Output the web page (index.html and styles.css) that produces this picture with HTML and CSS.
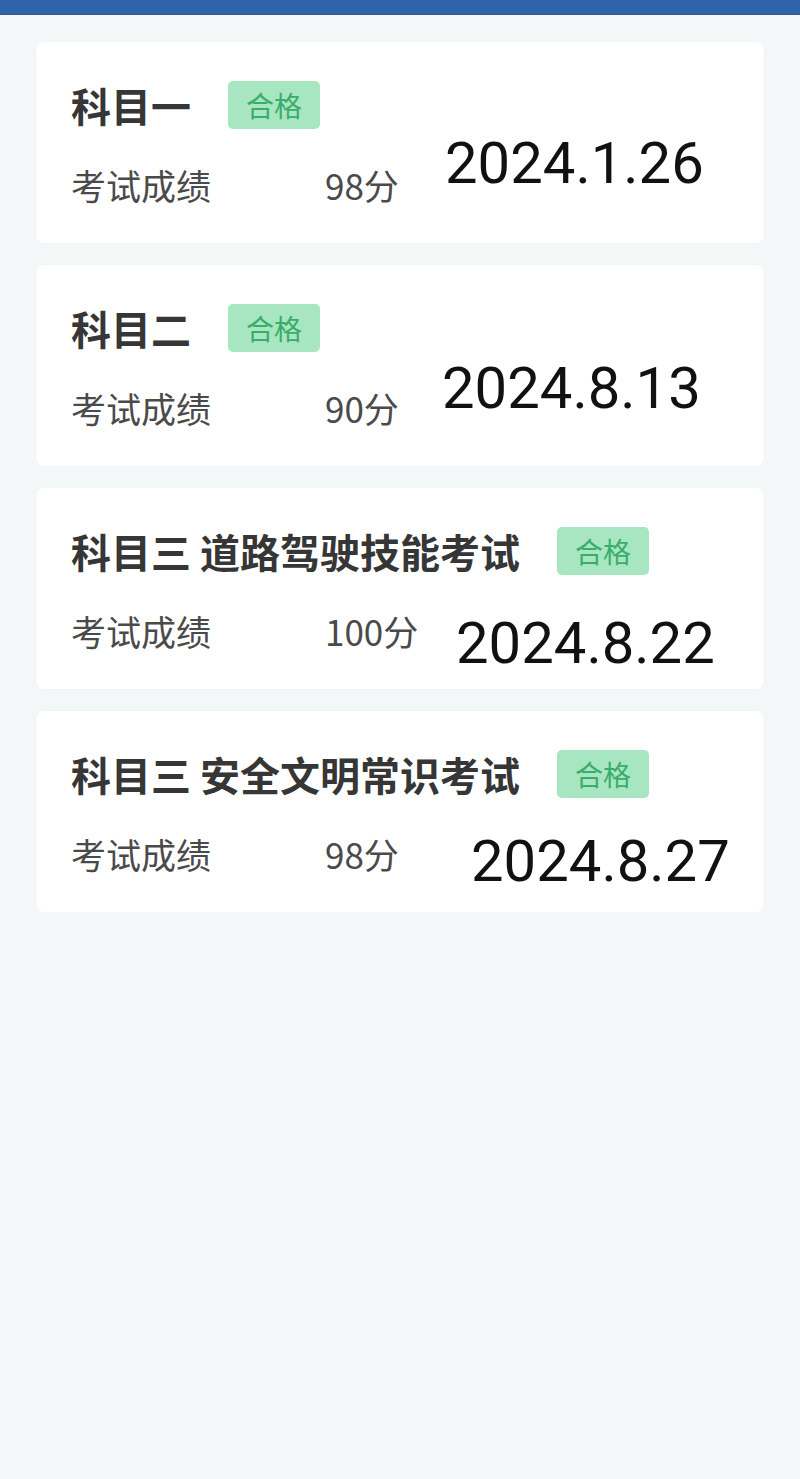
FILE: index.html
```html
<!DOCTYPE html>
<html>
<head>
  <title>考试成绩</title>
  <meta charset="UTF-8">
  <link rel="stylesheet" href="styles.css">
</head>
<body>
  <div class="topbar"></div>

  <div class="list">
    <div class="card">
      <div class="card-head">
        <span class="subject">科目一</span>
        <span class="tag">合格</span>
      </div>
      <div class="card-row">
        <span class="label">考试成绩</span>
        <span class="score">98分</span>
        <span class="date date-1">2024.1.26</span>
      </div>
    </div>

    <div class="card">
      <div class="card-head">
        <span class="subject">科目二</span>
        <span class="tag">合格</span>
      </div>
      <div class="card-row">
        <span class="label">考试成绩</span>
        <span class="score">90分</span>
        <span class="date date-2">2024.8.13</span>
      </div>
    </div>

    <div class="card">
      <div class="card-head">
        <span class="subject">科目三 道路驾驶技能考试</span>
        <span class="tag">合格</span>
      </div>
      <div class="card-row">
        <span class="label">考试成绩</span>
        <span class="score">100分</span>
        <span class="date date-3">2024.8.22</span>
      </div>
    </div>

    <div class="card">
      <div class="card-head">
        <span class="subject">科目三 安全文明常识考试</span>
        <span class="tag">合格</span>
      </div>
      <div class="card-row">
        <span class="label">考试成绩</span>
        <span class="score">98分</span>
        <span class="date date-4">2024.8.27</span>
      </div>
    </div>
  </div>
</body>
</html>
```

FILE: styles.css
```css
body {
  margin: 0;
  font-family: "Noto Sans CJK SC", "Noto Sans", sans-serif;
  background-color: #f3f7f8;
  min-height: 1479px;
}

.topbar {
  height: 13px;
  background-color: #2f63aa;
  border-bottom: 2px solid #3a5f95;
}

.list {
  display: flex;
  flex-direction: column;
  gap: 22px;
  padding: 27px 36px 0 36px;
}

.card {
  height: 201px;
  box-sizing: border-box;
  padding: 39px 0 0 35px;
  background-color: #fff;
  border-radius: 8px;
  box-shadow: 0 0 2px rgba(0, 0, 0, 0.03);
}

.card-head {
  display: flex;
  align-items: center;
  height: 48px;
}

.subject {
  font-size: 40px;
  line-height: 48px;
  font-weight: 700;
  color: #363636;
  white-space: nowrap;
}

.tag {
  display: flex;
  align-items: center;
  justify-content: center;
  width: 92px;
  height: 48px;
  margin-left: 37px;
  background-color: #a8e6c2;
  color: #3aad6b;
  font-size: 28px;
  border-radius: 5px;
}

.card-row {
  display: flex;
  align-items: center;
  height: 48px;
  margin-top: 31px;
  color: #4a4a4a;
  font-size: 35px;
}

.label {
  width: 254px;
  flex-shrink: 0;
}

.score {
  width: 120px;
  flex-shrink: 0;
}

.date {
  align-self: flex-start;
  flex-shrink: 0;
  font-family: Roboto, "Liberation Sans", sans-serif;
  font-size: 58px;
  line-height: 58px;
  color: #111;
  white-space: nowrap;
}

.date-1 {
  margin-top: -26px;
}

.date-2 {
  margin-top: -24px;
  margin-left: -3px;
}

.date-3 {
  margin-top: 8px;
  margin-left: 11px;
}

.date-4 {
  margin-top: 3px;
  margin-left: 26px;
}
```
